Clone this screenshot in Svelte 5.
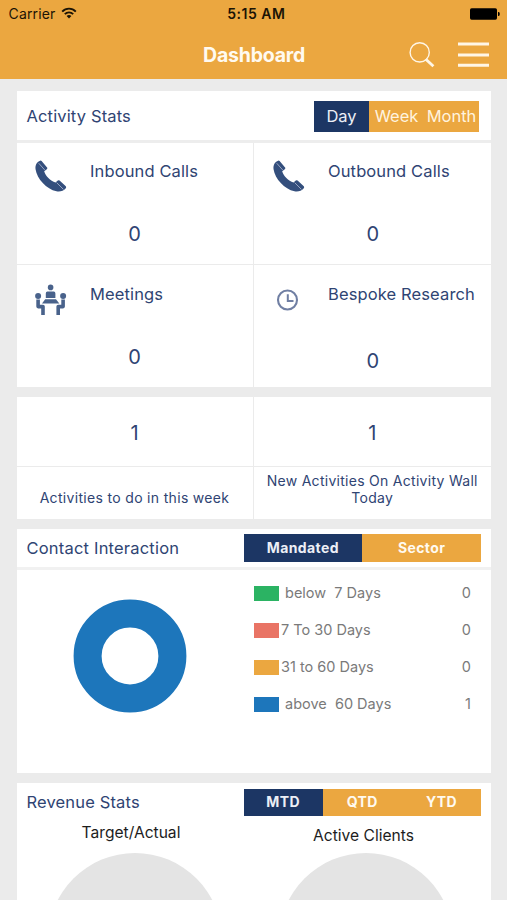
<script>
  const stats = [
    { label: 'Inbound Calls', value: 0, icon: 'phone' },
    { label: 'Outbound Calls', value: 0, icon: 'phone' },
    { label: 'Meetings', value: 0, icon: 'meeting' },
    { label: 'Bespoke Research', value: 0, icon: 'clock' }
  ];
  const ages = [
    { label: 'below  7 Days', value: 0, color: '#2bb363', inset: true },
    { label: '7 To 30 Days', value: 0, color: '#e97465' },
    { label: '31 to 60 Days', value: 0, color: '#eba740' },
    { label: 'above  60 Days', value: 1, color: '#1d76bb', inset: true }
  ];
</script>

<div class="screen">
  <header>
    <div class="status">
      <div class="carrier">
        <span>Carrier</span>
        <svg width="16" height="12" viewBox="0 0 16 12">
          <g fill="none" stroke="#1c1405" stroke-width="1.9">
            <path d="M1.2 4.6C5 .6 11 .6 14.8 4.6" />
            <path d="M3.8 7.2C6.2 4.8 9.8 4.8 12.2 7.2" />
          </g>
          <path d="M5.6 9C7 7.7 9 7.7 10.4 9L8 11.4z" fill="#1c1405" />
        </svg>
      </div>
      <b class="time">5:15 AM</b>
      <svg class="battery" width="30" height="12" viewBox="0 0 30 12">
        <rect x="0" y="0.3" width="27" height="11.4" rx="1.6" />
        <path d="M28 4h.5a1.3 2 0 0 1 0 4H28z" />
      </svg>
    </div>
    <div class="nav">
      <h1>Dashboard</h1>
      <svg width="26" height="26" viewBox="0 0 26 26" fill="none" stroke="#fff6e6">
        <circle cx="10.7" cy="10.4" r="9.6" stroke-width="1.4" />
        <path d="M16.8 17.2L24.4 24.2" stroke-width="2.9" />
      </svg>
      <svg class="menu" width="31" height="26" viewBox="0 0 31 26" stroke="#fff6e6" stroke-width="3">
        <path d="M0 2h31M0 13h31M0 23.3h31" />
      </svg>
    </div>
  </header>

  <main>
    <section class="card activity">
      <div class="head">
        <h2>Activity Stats</h2>
        <div class="seg period">
          <span class="on">Day</span><span>Week</span><span>Month</span>
        </div>
      </div>
      <div class="grid">
        {#each stats as s}
          <div class="cell {s.icon}">
            <div class="row">
              <div class="icon">
                {#if s.icon === 'phone'}
                  <svg width="32" height="32" viewBox="0 0 32 32">
                    <path d="M.8 5.2C1.4 3.2 3 1.5 5.1.7Q6 .4 6.6 1.1L12.3 7.8Q12.6 8.6 11.8 9.2L9.2 11.2C10.4 15.8 15.4 20.9 20.5 22.6L22.8 20.5Q23.7 19.8 24.6 20.5L30.8 26.3Q31.6 27.2 30.8 28.2C28.5 31 25 32 21.5 31.3C11.5 29.2 2 19 .5 9Q.2 6.8.8 5.2z" fill="#344f7d" />
                    <path d="M3.7 3.2L9.9 10.2M21.6 22.6L28.4 29.4" stroke="#a4afc8" stroke-width=".9" />
                  </svg>
                {:else if s.icon === 'meeting'}
                  <svg width="32" height="32" viewBox="0 0 32 32" fill="#49628b">
                    <circle cx="15.6" cy="3.4" r="2.8" />
                    <path d="M12.4 7.4h6.4q1.6 0 1.6 2v4.6h-9.6V9.4q0-2 1.6-2z" />
                    <path d="M10.2 15.2h10.8l3.3 4.2H7z" />
                    <circle cx="3.1" cy="11.9" r="3" />
                    <circle cx="28.1" cy="11.9" r="3" />
                    <path d="M3.1 15.5V22.6H8V31M28.1 15.5V22.6H23.2V31" fill="none" stroke="#49628b" stroke-width="3.6" stroke-linejoin="round" />
                  </svg>
                {:else}
                  <svg width="32" height="32" viewBox="0 0 32 32" fill="none" stroke="#707fa3">
                    <circle cx="15.5" cy="16" r="9.5" stroke-width="2.1" />
                    <path d="M15.8 10.3V17H21.5" stroke-width="2" />
                  </svg>
                {/if}
              </div>
              <span class="label">{s.label}</span>
            </div>
            <div class="num">{s.value}</div>
          </div>
        {/each}
      </div>
    </section>

    <section class="card todo">
      <div class="col">
        <div class="count">1</div>
        <p class="single">Activities to do in this week</p>
      </div>
      <div class="col">
        <div class="count">1</div>
        <p>New Activities On Activity Wall Today</p>
      </div>
    </section>

    <section class="card contact">
      <div class="head">
        <h2>Contact Interaction</h2>
        <div class="seg bold"><span class="on">Mandated</span><span>Sector</span></div>
      </div>
      <div class="chart">
        <svg width="114" height="114" viewBox="0 0 114 114">
          <circle cx="57" cy="57" r="42.4" fill="none" stroke="#1d76bb" stroke-width="28" />
        </svg>
        <ul>
          {#each ages as a}
            <li>
              <i style="background:{a.color}"></i>
              <span class="age" class:inset={a.inset}>{a.label}</span>
              <span>{a.value}</span>
            </li>
          {/each}
        </ul>
      </div>
    </section>

    <section class="card revenue">
      <div class="head">
        <h2>Revenue Stats</h2>
        <div class="seg bold"><span class="on">MTD</span><span>QTD</span><span>YTD</span></div>
      </div>
      <div class="gauges">
        <div class="gauge target"><h3>Target/Actual</h3><div class="disc"></div></div>
        <div class="gauge clients"><h3>Active Clients</h3><div class="disc"></div></div>
      </div>
    </section>
  </main>
</div>

<style>
  :global(body) { margin: 0; }
  .screen, .screen * { box-sizing: border-box; }
  .screen {
    width: 507px; height: 900px; overflow: hidden;
    background: #ebebeb; color: #2f4473;
    font-family: Inter, "Liberation Sans", sans-serif;
  }
  h1, h2, h3, p, ul { margin: 0; padding: 0; font-weight: 400; }
  svg { display: block; flex: none; }
  header { height: 79px; background: #eba740; }
  .status {
    height: 28px; padding: 0 7px 0 8.5px; color: #1c1405;
    display: grid; grid-template-columns: 1fr auto 1fr; align-items: center;
    font-size: 14px; line-height: 28px;
  }
  .carrier { display: flex; align-items: center; gap: 6px; letter-spacing: .15px; }
  .carrier svg { margin-top: -2px; }
  .time { font-weight: 600; font-size: 14px; letter-spacing: .5px; margin-left: 4px; }
  .battery { justify-self: end; fill: #000; }
  .nav { height: 51px; display: flex; align-items: center; padding: 3px 18px 0 203px; }
  h1 { flex: 1; color: #fffaf0; font-size: 19.5px; font-weight: 700; line-height: 24px; letter-spacing: -.2px; }
  .menu { margin-left: 23px; }
  main { padding: 12px 16px 0 16.5px; display: flex; flex-direction: column; gap: 10px; }
  .card { background: #fff; overflow: hidden; }
  .head { display: flex; align-items: center; justify-content: space-between; padding: 0 10px; }
  h2 { font-size: 16.5px; line-height: 24px; white-space: nowrap; letter-spacing: .15px; }
  .seg { display: flex; background: #eba740; color: #fff3df; }
  .seg span { display: flex; align-items: center; justify-content: center; }
  .seg .on { background: #1c3664; color: #eceff6; }
  .period { width: 165px; height: 31px; font-size: 16.5px; margin-right: 2px; }
  .period span { width: 55px; }
  .bold { width: 237.5px; height: 27.5px; font-size: 14px; font-weight: 700; letter-spacing: .4px; line-height: 17px; }
  .bold span { flex: 1; color: #fffaf0; padding-bottom: 1px; }

  .activity { height: 296px; }
  .activity .head { height: 52px; border-bottom: 3px solid #ededed; padding-top: 1px; }
  .grid { display: grid; grid-template-columns: 237px 1fr; grid-template-rows: 122px 122px; }
  .cell { border-right: 1px solid #ebebeb; border-bottom: 1px solid #ebebeb; }
  .cell:nth-child(2n) { border-right: 0; padding-left: 1px; }
  .cell:nth-child(n + 3) { border-bottom: 0; }
  .row { display: flex; padding: 17px 0 0 18px; }
  .meeting .row, .clock .row { padding-top: 18px; }
  .meeting svg { margin-top: 1px; }
  .clock svg { margin: 1px 0 0 -1px; }
  .icon { width: 32px; height: 32px; }
  .label { margin: -1px 0 1px 23.5px; font-size: 16.5px; line-height: 24px; white-space: nowrap; letter-spacing: .12px; }
  .num { padding-top: 30px; font-size: 20px; line-height: 24px; text-align: center; }
  .clock .num { padding-top: 34px; }

  .todo { height: 122px; display: flex; }
  .col { width: 237px; border-right: 1px solid #ebebeb; }
  .col:last-child { width: 237.5px; border-right: 0; }
  .count { height: 70px; padding-top: 1px; border-bottom: 1px solid #ebebeb; font-size: 20px; line-height: 70px; text-align: center; }
  p { padding-top: 5px; font-size: 14px; line-height: 17px; text-align: center; letter-spacing: .28px; }
  .single { padding-top: 22px; letter-spacing: .32px; }

  .contact { height: 244px; }
  .contact .head { height: 41px; border-bottom: 3px solid #f1f1f1; }
  .contact h2 { letter-spacing: .2px; }
  .chart { display: flex; }
  .chart svg { margin: 29px 0 0 56.5px; }
  ul { list-style: none; width: 217px; margin: 4px 0 0 67px; color: #7a7a7a; font-size: 14.5px; }
  li { height: 37px; display: flex; align-items: center; }
  li i { width: 24.5px; height: 15px; margin-top: 1px; }
  .age { flex: 1; margin-left: 2.5px; white-space: pre; }
  .inset { margin-left: 6.5px; }

  .revenue { height: 140px; }
  .revenue .head { height: 38.5px; }
  .gauges { display: flex; color: #1d1d1d; }
  .gauge { display: flex; flex-direction: column; align-items: center; }
  .target { width: 237px; }
  .clients { width: 225px; }
  h3 { height: 31px; font-size: 15.6px; line-height: 24px; white-space: nowrap; }
  .target h3 { margin: -1px -1px 1px -9px; }
  .clients h3 { padding-top: 2px; margin-left: -5px; }
  .disc { width: 174px; height: 174px; flex: none; border-radius: 50%; background: #e4e4e4; }
</style>
